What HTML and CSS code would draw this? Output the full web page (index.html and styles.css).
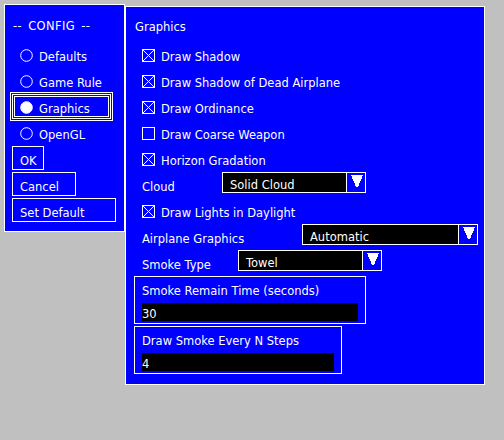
FILE: index.html
```html
<!DOCTYPE html>
<html>
<head>
<meta charset="utf-8">
<title>Config</title>
<link rel="stylesheet" href="styles.css">
</head>
<body>
<div class="screen">
  <div class="side">
    <div class="side-title">-- CONFIG --</div>
    <div class="radio-list">
      <div class="radio"><svg class="dot" width="13" height="13" viewBox="0 0 13 13"><circle cx="6.5" cy="6.5" r="5.8" fill="none" stroke="#fff" stroke-width="1"/></svg>Defaults</div>
      <div class="radio"><svg class="dot" width="13" height="13" viewBox="0 0 13 13"><circle cx="6.5" cy="6.5" r="5.8" fill="none" stroke="#fff" stroke-width="1"/></svg>Game Rule</div>
      <div class="radio selected"><svg class="dot" width="13" height="13" viewBox="0 0 13 13"><circle cx="6.5" cy="6.5" r="5.8" fill="#fff" stroke="#fff" stroke-width="1"/></svg>Graphics</div>
      <div class="radio"><svg class="dot" width="13" height="13" viewBox="0 0 13 13"><circle cx="6.5" cy="6.5" r="5.8" fill="none" stroke="#fff" stroke-width="1"/></svg>OpenGL</div>
    </div>
    <div class="buttons">
      <div class="btn btn-ok">OK</div>
      <div class="btn btn-cancel">Cancel</div>
      <div class="btn btn-default">Set Default</div>
    </div>
  </div>
  <div class="main">
    <div class="main-title">Graphics</div>
    <div class="row"><svg class="check" width="13" height="13" viewBox="0 0 13 13" shape-rendering="crispEdges"><rect x="0.5" y="0.5" width="12" height="12" fill="none" stroke="#fff"/><path d="M1 1L12 12M12 1L1 12" stroke="#fff"/></svg>Draw Shadow</div>
    <div class="row"><svg class="check" width="13" height="13" viewBox="0 0 13 13" shape-rendering="crispEdges"><rect x="0.5" y="0.5" width="12" height="12" fill="none" stroke="#fff"/><path d="M1 1L12 12M12 1L1 12" stroke="#fff"/></svg>Draw Shadow of Dead Airplane</div>
    <div class="row"><svg class="check" width="13" height="13" viewBox="0 0 13 13" shape-rendering="crispEdges"><rect x="0.5" y="0.5" width="12" height="12" fill="none" stroke="#fff"/><path d="M1 1L12 12M12 1L1 12" stroke="#fff"/></svg>Draw Ordinance</div>
    <div class="row"><svg class="check" width="13" height="13" viewBox="0 0 13 13" shape-rendering="crispEdges"><rect x="0.5" y="0.5" width="12" height="12" fill="none" stroke="#fff"/></svg>Draw Coarse Weapon</div>
    <div class="row"><svg class="check" width="13" height="13" viewBox="0 0 13 13" shape-rendering="crispEdges"><rect x="0.5" y="0.5" width="12" height="12" fill="none" stroke="#fff"/><path d="M1 1L12 12M12 1L1 12" stroke="#fff"/></svg>Horizon Gradation</div>
    <div class="row sel-row">
      <span class="label label-cloud">Cloud</span>
      <div class="select select-cloud"><span class="value">Solid Cloud</span><span class="arrow"><svg width="12" height="12" viewBox="0 0 12 12" shape-rendering="crispEdges"><polygon points="0,0 12,0 7,12 5,12" fill="#fff"/></svg></span></div>
    </div>
    <div class="row"><svg class="check" width="13" height="13" viewBox="0 0 13 13" shape-rendering="crispEdges"><rect x="0.5" y="0.5" width="12" height="12" fill="none" stroke="#fff"/><path d="M1 1L12 12M12 1L1 12" stroke="#fff"/></svg>Draw Lights in Daylight</div>
    <div class="row sel-row">
      <span class="label label-plane">Airplane Graphics</span>
      <div class="select select-plane"><span class="value">Automatic</span><span class="arrow"><svg width="12" height="12" viewBox="0 0 12 12" shape-rendering="crispEdges"><polygon points="0,0 12,0 7,12 5,12" fill="#fff"/></svg></span></div>
    </div>
    <div class="row sel-row">
      <span class="label label-smoke">Smoke Type</span>
      <div class="select select-smoke"><span class="value">Towel</span><span class="arrow"><svg width="12" height="12" viewBox="0 0 12 12" shape-rendering="crispEdges"><polygon points="0,0 12,0 7,12 5,12" fill="#fff"/></svg></span></div>
    </div>
    <div class="field-box box-remain">
      <div class="field-label">Smoke Remain Time (seconds)</div>
      <div class="field">30</div>
    </div>
    <div class="field-box box-steps">
      <div class="field-label">Draw Smoke Every N Steps</div>
      <div class="field">4</div>
    </div>
  </div>
</div>
</body>
</html>
```

FILE: styles.css
```css
html, body {
  margin: 0;
  padding: 0;
}
body {
  width: 504px;
  height: 440px;
  background: #c0c0c0;
  font-family: "DejaVu Sans", "Liberation Sans", sans-serif;
  font-size: 11.5px;
  color: #fff;
  overflow: hidden;
}
.screen {
  display: flex;
  align-items: flex-start;
  padding: 4px 0 0 4px;
}

/* left menu */
.side {
  width: 121px;
  height: 228px;
  box-sizing: border-box;
  border: 1px solid #fff;
  background: #0000ff;
  padding: 8px 0 0 7px;
}
.side-title {
  line-height: 26px;
  padding-left: 1px;
  white-space: nowrap;
  word-spacing: 2px;
  letter-spacing: 0.4px;
}
.radio-list {
  margin-top: 5px;
}
.radio {
  position: relative;
  line-height: 26px;
  height: 26px;
  padding-left: 8px;
  white-space: nowrap;
}
.dot {
  vertical-align: -1px;
  margin-right: 6px;
}
.radio.selected::before {
  content: "";
  position: absolute;
  left: 2px;
  top: 0;
  width: 93px;
  height: 19px;
  border: 1px solid #fff;
  box-shadow: 0 0 0 1px #0000ff, 0 0 0 2px #fff, 0 0 0 3px #0000ff, 0 0 0 4px #fff;
}
.buttons {
  margin-top: -2px;
  display: flex;
  flex-direction: column;
  align-items: flex-start;
  gap: 2px;
}
.btn {
  box-sizing: border-box;
  height: 24px;
  border: 1px solid #fff;
  padding: 7px 0 0 7px;
  line-height: 14px;
  white-space: nowrap;
}
.btn-ok { width: 32px; }
.btn-cancel { width: 64px; }
.btn-default { width: 104px; }

/* right panel */
.main {
  margin-top: 2px;
  width: 360px;
  height: 379px;
  box-sizing: border-box;
  border: 1px solid #fff;
  background: #0000ff;
  padding: 7px 0 0 8px;
}
.main-title {
  line-height: 26px;
  padding-left: 1px;
  margin-bottom: 4px;
}
.row {
  height: 26px;
  line-height: 26px;
  padding-left: 8px;
  white-space: nowrap;
}
.check {
  vertical-align: -1px;
  margin-right: 6px;
}
.sel-row {
  display: flex;
  align-items: flex-start;
}
.label { flex: none; }
.label-cloud { width: 80px; }
.label-plane { width: 160px; }
.label-smoke { width: 96px; }
.select {
  display: flex;
  flex: none;
  height: 21px;
  box-sizing: border-box;
  border: 1px solid #fff;
  background: #000;
  margin-top: -2px;
}
.select-cloud { width: 144px; }
.select-plane { width: 176px; }
.select-smoke { width: 144px; }
.value {
  flex: 1;
  padding: 5px 0 0 7px;
  line-height: 14px;
  overflow: hidden;
}
.arrow {
  flex: none;
  width: 19px;
  box-sizing: border-box;
  border-left: 1px solid #fff;
  background: #0000ff;
  padding: 2px 0 0 4px;
  line-height: 0;
}
.field-box {
  box-sizing: border-box;
  border: 1px solid #fff;
  height: 48px;
  padding: 7px 7px 0 7px;
}
.box-remain {
  margin-top: -2px;
  width: 232px;
}
.box-steps {
  margin-top: 2px;
  width: 208px;
}
.field-label {
  line-height: 14px;
  white-space: nowrap;
}
.field {
  margin-top: 5px;
  height: 18px;
  box-sizing: border-box;
  background: #000;
  padding-top: 4px;
  line-height: 14px;
}
```
